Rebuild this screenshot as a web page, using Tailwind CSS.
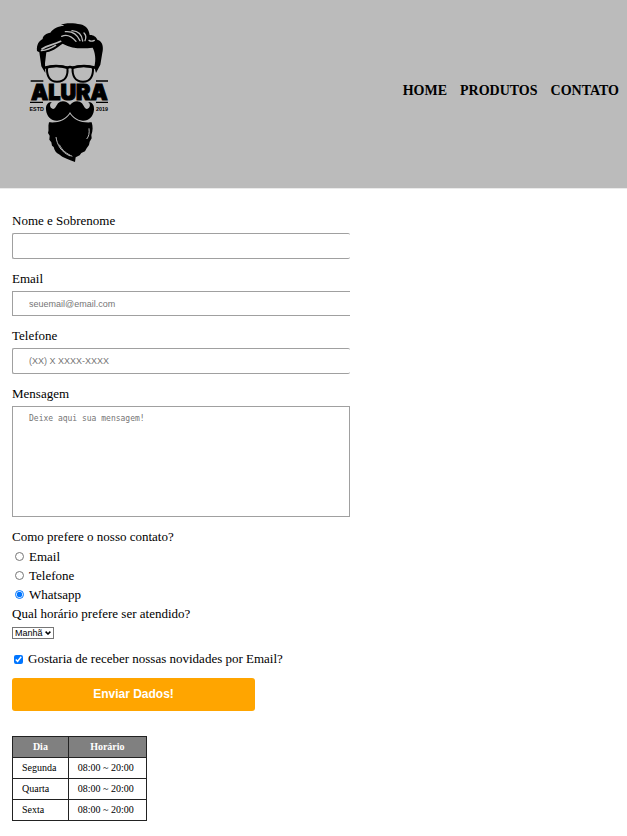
<!DOCTYPE html>
<html lang="pt-BR">
<head>
<meta charset="utf-8">
<meta name="viewport" content="width=device-width, initial-scale=1">
<title>Contato - Barbearia Alura</title>
<script src="https://cdn.jsdelivr.net/npm/@tailwindcss/browser@4"></script>
</head>
<body class="bg-white font-['Liberation_Serif',serif] text-[13px] leading-4 text-black">
<header class="flex items-center justify-between border-b border-[#eaeaea] bg-[#bbbbbb] pt-[15px] pr-2 pb-[18px] pl-5">
  <h1>
    <svg class="block h-[155px] w-[100px]" viewBox="0 0 300 465" role="img" aria-label="Alura">
      <path d="M51 108C49 88 58 77 68 72C67 63 80 54 91 53C99 40 119 32 133 33C128 29 123 28 120 30C138 22 166 25 180 28C199 31 207 45 209 60C220 59 229 66 232 74C249 78 251 99 247 113L241 149L228 174L223 155C229 132 225 112 218 98C190 101 158 103 128 86C115 94 103 107 79 112L75 145L76 174L64 154L58 112Z"/>
      <g fill="none" stroke="#bbb" stroke-linecap="round">
        <path stroke-width="4" d="M136 50C158 48 173 61 180 77M156 47C175 48 186 60 188 78M125 64C140 57 156 65 168 79"/>
        <path stroke-width="5" d="M66 102C82 90 98 91 122 79"/>
        <path stroke-width="4" d="M64 107C84 105 96 98 107 91M207 76C213 80 219 78 223 76M192 54C199 61 199 68 195 77"/>
      </g>
      <g fill="none" stroke="#000" stroke-width="6">
        <path d="M81 158C95 151 127 151 142 158C145 180 137 200 111 200C88 200 80 182 81 158ZM158 158C174 151 205 151 219 158C220 182 212 200 189 200C164 200 156 180 158 158Z"/>
        <path stroke-width="8" d="M73 158Q108 148 143 158Q150 154 157 158Q192 148 227 158"/>
        <path stroke-width="4" d="M32 198H70M228 198H264M30 262H69M228 262H264"/>
      </g>
      <text x="148" y="255" text-anchor="middle" font-family="Inter, sans-serif" font-weight="900" font-size="65" stroke="#000" stroke-width="3">ALURA</text>
      <g font-family="Liberation Sans Narrow, Liberation Sans, sans-serif" font-weight="700" font-size="16" text-anchor="middle">
        <text x="50" y="287">ESTD</text>
        <text x="246" y="287">2019</text>
      </g>
      <path d="M150 270C141 257 123 255 114 265C107 276 103 286 95 280C88 275 89 265 96 261C84 260 77 270 78 284C80 305 94 318 112 317C130 315 142 305 150 291C158 305 170 315 188 317C206 318 220 305 222 284C223 270 216 260 204 261C211 265 212 275 205 280C197 286 193 276 186 265C177 255 159 257 150 270Z"/>
      <path d="M150 297C138 314 116 325 87 322C83 334 88 344 84 354L89 362L88 374L94 382L96 392L101 396C103 407 110 415 117 418C129 429 146 434 165 441L167 427L179 421L184 414L195 409L200 400L207 390L209 380L215 370L214 360C219 347 219 335 215 322C184 325 162 314 150 297Z"/>
      <path d="M108 366C111 389 124 412 151 423M118 389C127 407 140 416 157 424M207 340C209 355 206 365 200 372" fill="none" stroke="#bbb" stroke-width="3"/>
    </svg>
  </h1>
  <nav class="pb-1">
    <ul class="flex gap-[13px] text-sm font-bold uppercase">
      <li><a href="#home">Home</a></li>
      <li><a href="#produtos">Produtos</a></li>
      <li><a href="#contato">Contato</a></li>
    </ul>
  </nav>
</header>
<main class="px-3 pt-6 pb-3">
  <form onsubmit="return false">
    <div class="flex w-[56%] flex-col gap-3">
      <div class="flex flex-col gap-1">
        <label for="nome">Nome e Sobrenome</label>
        <input id="nome" type="text" class="h-[26px] rounded-xs border border-r-0 border-[#a0a0a0] px-4 font-['Liberation_Sans',sans-serif] text-[9px]">
      </div>
      <div class="flex flex-col gap-1">
        <label for="email">Email</label>
        <input id="email" type="email" placeholder="seuemail@email.com" class="h-[25px] border border-r-0 border-[#a0a0a0] px-4 font-['Liberation_Sans',sans-serif] text-[9px] placeholder:text-[#757575]">
      </div>
      <div class="flex flex-col gap-1">
        <label for="telefone">Telefone</label>
        <input id="telefone" type="tel" placeholder="(XX) X XXXX-XXXX" class="h-[26px] rounded-xs border border-r-0 border-[#a0a0a0] px-4 font-['Liberation_Sans',sans-serif] text-[9px] placeholder:text-[#757575]">
      </div>
      <div class="flex flex-col gap-1">
        <label for="mensagem">Mensagem</label>
        <textarea id="mensagem" placeholder="Deixe aqui sua mensagem!" class="h-[111px] resize-none border border-[#a0a0a0] px-4 py-1 font-['DejaVu_Sans_Mono',monospace] text-[8px] leading-4 placeholder:text-[#757575]"></textarea>
      </div>
    </div>
    <fieldset class="mt-[10px] leading-[19px]">
      <legend class="leading-5">Como prefere o nosso contato?</legend>
      <label class="flex items-center gap-[5px] pl-[3px]"><input type="radio" name="contato" value="email" class="size-[9px]">Email</label>
      <label class="flex items-center gap-[5px] pl-[3px]"><input type="radio" name="contato" value="telefone" class="size-[9px]">Telefone</label>
      <label class="flex items-center gap-[5px] pl-[3px]"><input type="radio" name="contato" value="whatsapp" checked class="size-[9px]">Whatsapp</label>
    </fieldset>
    <div class="flex flex-col items-start gap-1">
      <label for="horario" class="leading-[19px]">Qual horário prefere ser atendido?</label>
      <div class="grid items-center">
        <select id="horario" class="col-start-1 row-start-1 h-3 w-[42px] appearance-none border border-[#767676] bg-white pl-[2px] font-['Liberation_Sans',sans-serif] text-[9px] leading-[10px]">
          <option>Manhã</option>
          <option>Tarde</option>
          <option>Noite</option>
        </select>
        <svg class="pointer-events-none col-start-1 row-start-1 mr-[3px] h-1 w-[6px] justify-self-end" viewBox="0 0 6 4" aria-hidden="true"><path d="M.6.6 3 3 5.4.6" fill="none" stroke="#000" stroke-width="1.5"/></svg>
      </div>
    </div>
    <label class="mt-3 flex items-center gap-[5px] pl-[2px]"><input type="checkbox" checked class="size-[9px]">Gostaria de receber nossas novidades por Email?</label>
    <button type="submit" class="mt-[11px] block h-[33px] w-[243px] max-w-full rounded-[3px] bg-[#ffa500] pb-[2px] font-['Liberation_Sans',sans-serif] text-xs font-bold text-white">Enviar Dados!</button>
  </form>
  <table class="mt-[25px] w-[135px] border-collapse text-[10px] leading-[14px]">
    <thead class="bg-[#808080] text-white">
      <tr>
        <th class="border border-[#222] px-[9px] py-[3px]">Dia</th>
        <th class="border border-[#222] px-[9px] py-[3px]">Horário</th>
      </tr>
    </thead>
    <tbody>
      <tr><td class="border border-[#222] px-[9px] py-[3px]">Segunda</td><td class="border border-[#222] px-[9px] py-[3px]">08:00 ~ 20:00</td></tr>
      <tr><td class="border border-[#222] px-[9px] py-[3px]">Quarta</td><td class="border border-[#222] px-[9px] py-[3px]">08:00 ~ 20:00</td></tr>
      <tr><td class="border border-[#222] px-[9px] py-[3px]">Sexta</td><td class="border border-[#222] px-[9px] py-[3px]">08:00 ~ 20:00</td></tr>
    </tbody>
  </table>
</main>
</body>
</html>
